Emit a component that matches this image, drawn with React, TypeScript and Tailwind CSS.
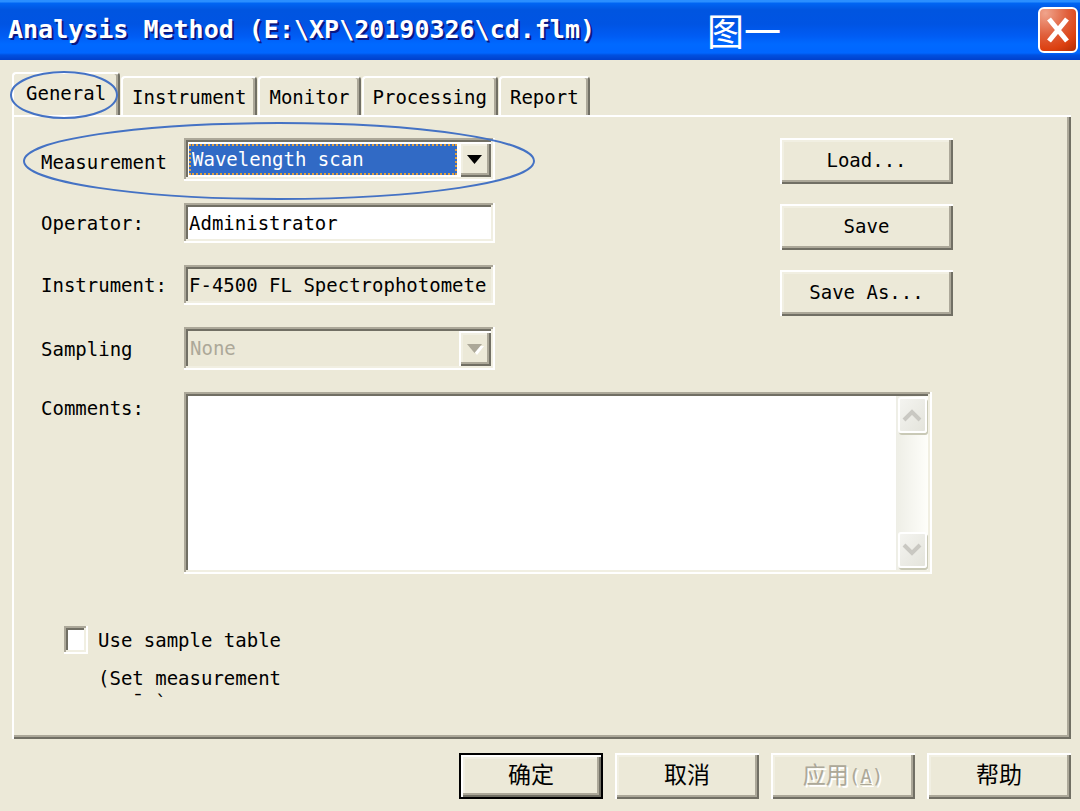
import React, { useState } from 'react';

const TABS = ['General', 'Instrument', 'Monitor', 'Processing', 'Report'];

const raised = 'shadow-[inset_2px_2px_0_#ffffff,inset_-2px_-2px_0_#716f64,inset_-4px_-4px_0_#aca899,inset_4px_4px_0_#f1efe2]';
const sunken = 'shadow-[inset_-2px_-2px_0_#ffffff,inset_2px_2px_0_#aca899,inset_-4px_-4px_0_#f1efe2,inset_4px_4px_0_#716f64]';

interface ButtonProps {
    children: React.ReactNode;
    className?: string;
    isDefault?: boolean;
    disabled?: boolean;
}

const Button: React.FC<ButtonProps> = ({ children, className = '', isDefault, disabled }) => (
    <button
        type="button"
        disabled={disabled}
        className={`h-[46px] bg-[#ece9d8] pb-0.5 ${isDefault ? 'border-2 border-black' : ''} ${disabled ? 'text-[#aca899] [text-shadow:2px_2px_0_#ffffff]' : ''} ${raised} ${className}`}
    >
        {children}
    </button>
);

interface ComboProps {
    id: string;
    options: string[];
    disabled?: boolean;
}

const Combo: React.FC<ComboProps> = ({ id, options, disabled }) => (
    <div className={`flex h-[43px] p-1 ${sunken} ${disabled ? 'bg-[#ece9d8]' : 'bg-white'}`}>
        <select
            id={id}
            disabled={disabled}
            className={`my-[2px] ml-px min-w-0 flex-1 appearance-none pl-px leading-[27px] outline-none ${disabled ? 'text-[#aca899] opacity-100' : 'border-2 border-dotted border-[#e0a040] bg-[#316ac5] text-white'}`}
        >
            {options.map((option) => (
                <option key={option}>{option}</option>
            ))}
        </select>
        <span className={`ml-0.5 flex w-8 items-center justify-center bg-[#ece9d8] ${raised}`} aria-hidden="true">
            <svg width="20" height="14" viewBox="0 0 20 14" className="shrink-0">
                {disabled && <path d="M5 4h14l-7 9z" fill="#fff" />}
                <path d="M2 2h15l-7.5 9z" fill={disabled ? '#aca899' : '#000'} />
            </svg>
        </span>
    </div>
);

const ScrollButton: React.FC<{ label: string; path: string }> = ({ label, path }) => (
    <button
        type="button"
        aria-label={label}
        disabled
        className="flex h-9 w-[29px] items-center justify-center rounded-[3px] border-2 border-white bg-linear-to-br from-[#f4f4f0] to-[#e4e4dc] shadow-[1px_2px_0_#c9c9b6]"
    >
        <svg width="20" height="16" viewBox="0 0 20 16" fill="none" stroke="#c9c8c2" strokeWidth="4">
            <path d={path} />
        </svg>
    </button>
);

const App: React.FC = () => {
    const [activeTab, setActiveTab] = useState('General');
    const [operator, setOperator] = useState('Administrator');
    const [comments, setComments] = useState('');

    return (
        <div className="relative flex min-h-screen flex-col bg-[#ece9d8] font-['DejaVu_Sans_Mono','Noto_Sans_CJK_SC',monospace] text-[19px] leading-6 text-black">
            <header className="flex h-[60px] items-center bg-[linear-gradient(180deg,#2a8fff_0px,#2a8fff_2px,#0066f4_3px,#0055e0_10px,#0054e3_24px,#005cf4_36px,#0069ff_44px,#0066ff_53px,#0050e0_55px,#0040cc_60px)] pr-0.5 pl-2 text-white">
                <h1 className="text-[25px] font-bold whitespace-pre [text-shadow:2px_2px_0_#0a1883]">Analysis Method (E:\XP\20190326\cd.flm)</h1>
                <span className="ml-28 font-['Noto_Sans_CJK_SC',sans-serif] text-[37px] leading-[56px] font-normal">图一</span>
                <button
                    type="button"
                    aria-label="Close"
                    className="ml-auto flex h-[46px] w-10 items-center justify-center rounded-md border-2 border-white bg-[radial-gradient(circle_at_15%_10%,#f0a48c,#e0603c_45%,#dc4010_75%,#b02c04)]"
                >
                    <svg width="22" height="26" viewBox="0 0 22 26" stroke="#fff" strokeWidth="5">
                        <path d="M2 2l18 22M20 2L2 24" />
                    </svg>
                </button>
            </header>

            <main className="flex flex-1 flex-col pt-3 pr-[9px] pb-3 pl-3">
                <div role="tablist" className="flex items-end gap-px">
                    {TABS.map((tab) => (
                        <button
                            key={tab}
                            type="button"
                            role="tab"
                            aria-selected={activeTab === tab}
                            onClick={() => setActiveTab(tab)}
                            className={`rounded-t-[4px] border-t-2 border-r-2 border-l-2 border-t-white border-r-[#716f64] border-l-white shadow-[inset_-2px_0_0_#aca899] ${activeTab === tab ? 'h-[43px] px-3 pb-1' : 'h-[39px] px-[9px]'}`}
                        >
                            {tab}
                        </button>
                    ))}
                </div>

                <section role="tabpanel" className="flex-1 bg-[#ece9d8] pt-[23px] pr-[118px] pl-[29px] shadow-[inset_2px_2px_0_#ffffff,inset_-2px_-2px_0_#716f64,inset_-4px_-4px_0_#aca899]">
                    <div className="flex items-start justify-between">
                        <div className="grid w-[454px] grid-cols-[143px_1fr] items-center gap-y-[22px]">
                            <label htmlFor="measurement" className="pt-1">Measurement</label>
                            <Combo id="measurement" options={['Wavelength scan']} />
                            <label htmlFor="operator">Operator:</label>
                            <input
                                id="operator"
                                type="text"
                                value={operator}
                                onChange={(e) => setOperator(e.target.value)}
                                className={`h-10 w-full bg-white pr-1 pl-[5px] outline-none ${sunken}`}
                            />
                            <label htmlFor="instrument">Instrument:</label>
                            <input
                                id="instrument"
                                type="text"
                                readOnly
                                value="F-4500 FL Spectrophotomete"
                                className={`h-10 w-full bg-[#ece9d8] pr-1 pl-[5px] outline-none ${sunken}`}
                            />
                            <label htmlFor="sampling">Sampling</label>
                            <Combo id="sampling" options={['None']} disabled />
                        </div>
                        <div className="flex w-[173px] flex-col gap-5">
                            <Button>Load...</Button>
                            <Button>Save</Button>
                            <Button>Save As...</Button>
                        </div>
                    </div>

                    <div className="mt-[22px] mr-[21px] flex">
                        <label htmlFor="comments" className="w-[143px] shrink-0 pt-1">Comments:</label>
                        <div className={`flex h-[182px] flex-1 bg-white p-1 ${sunken}`}>
                            <textarea
                                id="comments"
                                value={comments}
                                onChange={(e) => setComments(e.target.value)}
                                className="h-full flex-1 resize-none outline-none"
                            />
                            <div className="flex w-8 flex-col items-center justify-between bg-linear-to-r from-[#eeeee6] to-[#fefefa] pt-px pb-0.5">
                                <ScrollButton label="Scroll up" path="M2 13l8-8 8 8" />
                                <ScrollButton label="Scroll down" path="M2 3l8 8 8-8" />
                            </div>
                        </div>
                    </div>

                    <div className="mt-[52px] ml-[23px] flex items-start gap-2.5">
                        <input id="sample-table" type="checkbox" className={`h-7 w-6 shrink-0 appearance-none bg-white ${sunken}`} />
                        <label htmlFor="sample-table" className="pt-0.5">
                            <span className="block">Use sample table</span>
                            <span className="mt-3.5 block">(Set measurement</span>
                            <span className="block whitespace-pre">{'   ¯ `'}</span>
                        </label>
                    </div>
                </section>

                <footer className="mt-3.5 flex justify-end gap-3 text-[23px]">
                    <Button className="w-36" isDefault>确定</Button>
                    <Button className="w-36">取消</Button>
                    <Button className="w-36" disabled>
                        应用<span className="text-[19px]">(<u>A</u>)</span>
                    </Button>
                    <Button className="w-36">帮助</Button>
                </footer>
            </main>

            {/* annotation rings over the General tab and the Measurement row */}
            <svg className="pointer-events-none absolute top-0 left-0" width="560" height="210" fill="none" stroke="#4472c4" strokeWidth="2" aria-hidden="true">
                <ellipse cx="64" cy="95" rx="53" ry="23" />
                <ellipse cx="279" cy="161" rx="255" ry="38" />
            </svg>
        </div>
    );
};

export default App;
